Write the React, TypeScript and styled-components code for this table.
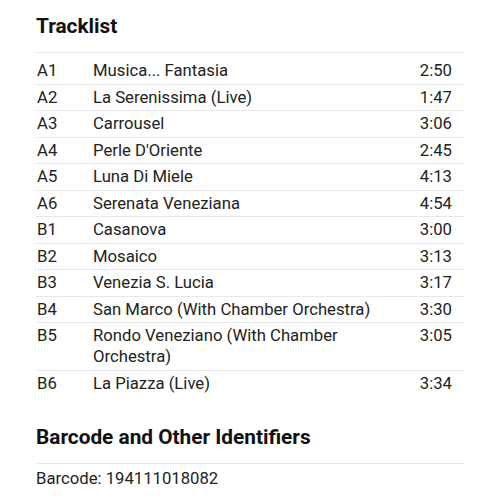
import styled, { createGlobalStyle } from "styled-components";

interface ITrack {
    position: string,
    title: string,
    duration: string
}

const tracks: ITrack[] = [
    { position: "A1", title: "Musica... Fantasia", duration: "2:50" },
    { position: "A2", title: "La Serenissima (Live)", duration: "1:47" },
    { position: "A3", title: "Carrousel", duration: "3:06" },
    { position: "A4", title: "Perle D'Oriente", duration: "2:45" },
    { position: "A5", title: "Luna Di Miele", duration: "4:13" },
    { position: "A6", title: "Serenata Veneziana", duration: "4:54" },
    { position: "B1", title: "Casanova", duration: "3:00" },
    { position: "B2", title: "Mosaico", duration: "3:13" },
    { position: "B3", title: "Venezia S. Lucia", duration: "3:17" },
    { position: "B4", title: "San Marco (With Chamber Orchestra)", duration: "3:30" },
    { position: "B5", title: "Rondo Veneziano (With Chamber Orchestra)", duration: "3:05" },
    { position: "B6", title: "La Piazza (Live)", duration: "3:34" },
];

const GlobalStyle = createGlobalStyle`
    body {
        margin: 0;
        background: #fff;
        font-family: Roboto, "Liberation Sans", sans-serif;
        color: #222;
    }
`;

export default function App() {
    return (
        <Page>
            <GlobalStyle />
            <Section>
                <Heading>Tracklist</Heading>
                <Table>
                    {tracks.map((track) => (
                        <Row key={track.position}>
                            <Position>{track.position}</Position>
                            <Title>{track.title}</Title>
                            <Duration>{track.duration}</Duration>
                        </Row>
                    ))}
                </Table>
            </Section>
            <Section>
                <Heading>Barcode and Other Identifiers</Heading>
                <Identifier>Barcode: 194111018082</Identifier>
            </Section>
        </Page>
    );
}

const Page = styled.div`
    width: 429px;
    margin: 0 0 0 36px;
    padding-top: 14px;
`;

const Section = styled.section`
    & + & {
        margin-top: 29px;
    }
`;

const Heading = styled.h2`
    margin: 0;
    padding-bottom: 14px;
    border-bottom: 1px solid #e8e8e8;
    font-size: 20.8px;
    font-weight: 700;
    line-height: 24px;
    color: #111;
`;

const Table = styled.div`
    margin-top: 5px;
`;

const Row = styled.div`
    display: grid;
    grid-template-columns: 57px 1fr 50px;
    padding: 2.25px 0;
    font-size: 16.7px;
    line-height: 21px;
    border-bottom: 1px solid #e8e8e8;

    &:last-child {
        border-bottom: none;
    }
`;

const Position = styled.span`
    padding-left: 1px;
`;

const Title = styled.span`
    padding-right: 10px;
`;

const Duration = styled.span`
    text-align: right;
    padding-right: 13px;
`;

const Identifier = styled.div`
    margin-top: 4px;
    font-size: 16.7px;
    line-height: 21px;
`;
